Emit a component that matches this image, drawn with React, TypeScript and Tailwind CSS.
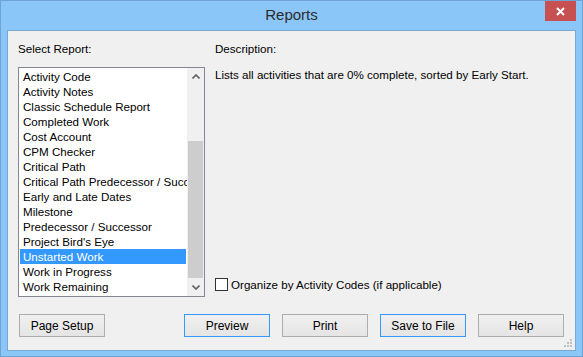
import React from "react";

const reports = [
  "Activity Code",
  "Activity Notes",
  "Classic Schedule Report",
  "Completed Work",
  "Cost Account",
  "CPM Checker",
  "Critical Path",
  "Critical Path Predecessor / Successor",
  "Early and Late Dates",
  "Milestone",
  "Predecessor / Successor",
  "Project Bird's Eye",
  "Unstarted Work",
  "Work in Progress",
  "Work Remaining",
];

const font = { fontFamily: '"Liberation Sans", Arial, sans-serif' };

function Btn({ label, primary }: { label: string; primary?: boolean }) {
  return (
    <button
      className={`w-[86px] h-[23px] border bg-gradient-to-b from-[#f0f0f0] to-[#e5e5e5] text-[12px] text-black leading-none ${
        primary ? "border-[#3399ff]" : "border-[#adadad]"
      }`}
    >
      {label}
    </button>
  );
}

export default function App() {
  const selected = "Unstarted Work";

  return (
    <div
      style={font}
      className="w-[583px] h-[357px] bg-[#8bc6f8] border border-[#6fa3d6] flex flex-col overflow-hidden"
    >
      {/* Title bar */}
      <div className="relative h-[29px] flex items-center justify-center">
        <span className="text-[15px] text-[#2b2b2b]">Reports</span>
        <div className="absolute right-[6px] top-0 w-[31px] h-[20px] bg-[#c75050] flex items-center justify-center">
          <svg width="9" height="9" viewBox="0 0 9 9">
            <path d="M1 1L8 8M8 1L1 8" stroke="#fff" strokeWidth="2" />
          </svg>
        </div>
      </div>

      {/* Body */}
      <div className="relative mx-[6px] h-[321px] bg-[#f0f0f0] border border-[#7aa6d2] pt-[10px] px-[10px] text-[11.6px] text-black">
        <div className="flex gap-[10px]">
          {/* Left column */}
          <div className="w-[187px] flex flex-col">
            <div className="h-[15px] leading-[16px] mb-[11px]">Select Report:</div>
            <div className="h-[230px] border border-[#828790] bg-white flex">
              <div className="flex-1 pt-[1px] pl-[1px] overflow-hidden">
                {reports.map((r) => (
                  <div
                    key={r}
                    className={`h-[15px] leading-[16px] pl-[3px] whitespace-nowrap overflow-hidden ${
                      r === selected ? "bg-[#3399ff] text-white mr-[1px]" : ""
                    }`}
                  >
                    {r}
                  </div>
                ))}
              </div>
              {/* Scrollbar */}
              <div className="w-[17px] bg-[#f0f0f0] flex flex-col">
                <div className="h-[17px] flex items-center justify-center">
                  <svg width="8" height="5" viewBox="0 0 8 5">
                    <path d="M0.5 4.5L4 1L7.5 4.5" stroke="#606060" strokeWidth="1.6" fill="none" />
                  </svg>
                </div>
                <div className="h-[56px]" />
                <div className="flex-1 bg-[#cdcdcd] mx-[1px]" />
                <div className="h-[18px] flex items-center justify-center">
                  <svg width="8" height="5" viewBox="0 0 8 5">
                    <path d="M0.5 0.5L4 4L7.5 0.5" stroke="#606060" strokeWidth="1.6" fill="none" />
                  </svg>
                </div>
              </div>
            </div>
          </div>

          {/* Right column */}
          <div className="flex-1 flex flex-col">
            <div className="h-[15px] leading-[16px] mb-[11px]">Description:</div>
            <div className="leading-[16px]">
              Lists all activities that are 0% complete, sorted by Early Start.
            </div>
            <div className="flex-1" />
            <label className="flex items-center gap-[3px] mb-[5px] h-[15px]">
              <span className="w-[13px] h-[13px] border border-[#333] bg-white" />
              <span className="leading-[16px]">Organize by Activity Codes (if applicable)</span>
            </label>
          </div>
        </div>

        {/* Buttons */}
        <div className="flex mt-[17px] pl-[1px] pr-[1px]">
          <Btn label="Page Setup" />
          <div className="ml-auto flex gap-[12px]">
            <Btn label="Preview" primary />
            <Btn label="Print" />
            <Btn label="Save to File" primary />
            <Btn label="Help" />
          </div>
        </div>

        {/* Resize grip */}
        <svg className="absolute right-[3px] bottom-[3px]" width="8" height="8" viewBox="0 0 8 8">
          <rect x="6" y="0" width="2" height="2" fill="#c0c0c0" />
          <rect x="3" y="3" width="2" height="2" fill="#c0c0c0" />
          <rect x="6" y="3" width="2" height="2" fill="#c0c0c0" />
          <rect x="0" y="6" width="2" height="2" fill="#c0c0c0" />
          <rect x="3" y="6" width="2" height="2" fill="#c0c0c0" />
          <rect x="6" y="6" width="2" height="2" fill="#c0c0c0" />
        </svg>
      </div>
    </div>
  );
}
